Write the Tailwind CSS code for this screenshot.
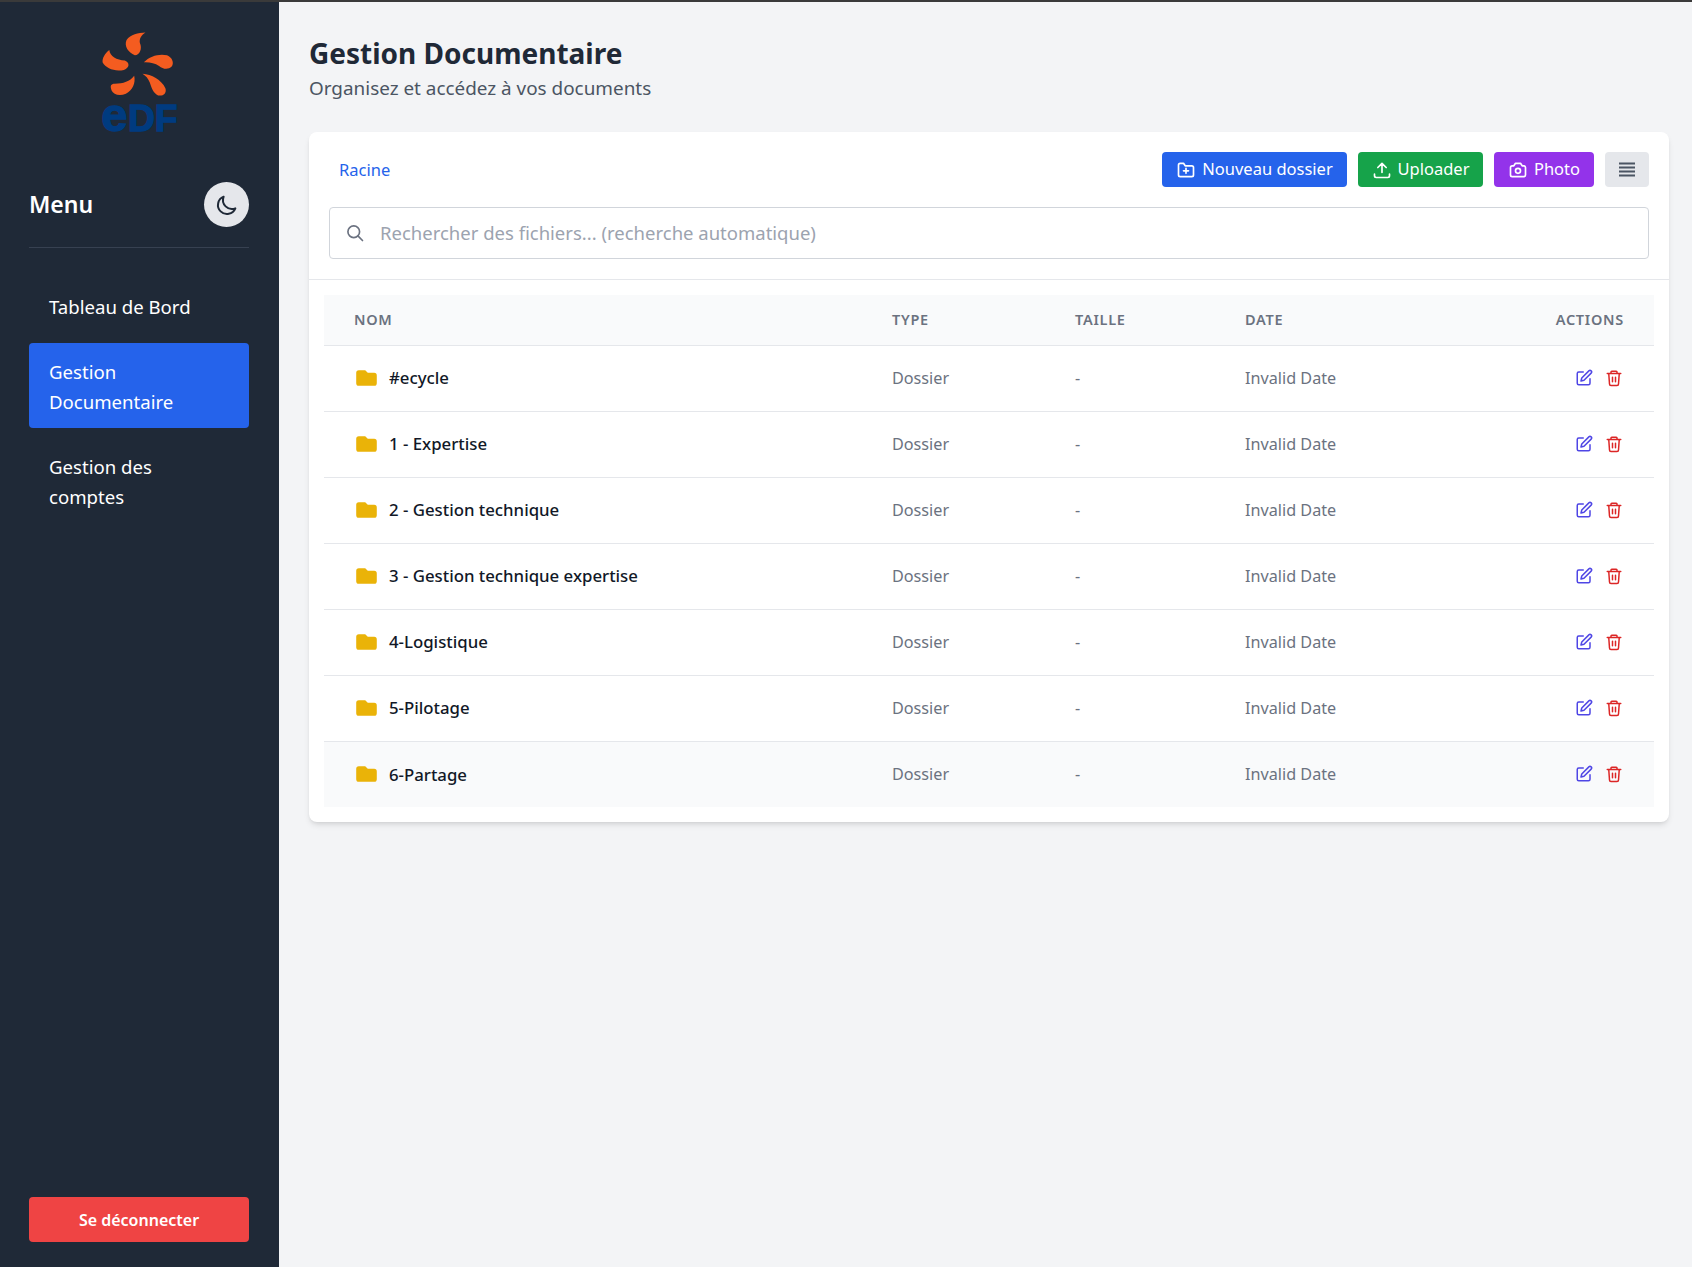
<!DOCTYPE html>
<html lang="fr"><head><meta charset="utf-8"><script src="https://cdn.jsdelivr.net/npm/@tailwindcss/browser@4"></script><title>Gestion Documentaire</title></head>
<body class="font-['Noto_Sans',sans-serif] bg-[#f3f4f6]">
<div class="h-[2px] bg-[#3a3a3a]"></div>
<div class="flex h-[1265px] overflow-hidden">
<aside class="w-[279px] shrink-0 bg-[#1f2937] pl-[29px] pr-[30px] flex flex-col text-white">
  <div class="flex justify-center pt-[28px] h-[180px]">
    <svg class="overflow-visible" width="78" height="103" viewBox="300 90 235 310">
      <g fill="#f45c20">
      <path d="M437 97C415 98 392 102 380 120C372 138 385 158 405 166C420 165 428 145 420 128C418 115 425 105 437 97Z"/>
      <path d="M432 187C450 168 480 160 502 166C518 172 524 190 516 200C505 210 490 208 478 198C465 190 450 186 432 187Z"/>
      <path d="M428 222C455 224 485 240 497 265C502 280 490 290 475 287C458 278 455 262 450 248C445 236 438 228 428 222Z"/>
      <path d="M403 228C408 250 398 272 378 282C358 290 340 284 335 272C330 258 332 252 345 252C370 252 390 245 403 228Z"/>
      <path d="M328 150C330 170 350 180 375 182C390 188 390 204 372 210C345 216 318 206 308 188C306 175 315 160 328 150Z"/>
      </g>
      <text y="393" x="304" fill="#003b80" stroke="#003b80" stroke-width="4" font-family="Liberation Sans" font-weight="700" font-size="112"><tspan font-size="142">e</tspan><tspan x="384">DF</tspan></text>
    </svg>
  </div>
  <div class="flex items-center justify-between pb-5 border-b border-[#374151]">
    <span class="text-[23px] font-semibold">Menu</span>
    <button class="w-[45px] h-[45px] rounded-full bg-[#e5e7eb] flex items-center justify-center text-[#1f2937]">
      <svg class="w-6 h-6" fill="none" stroke="currentColor" stroke-width="2" stroke-linecap="round" stroke-linejoin="round" viewBox="0 0 24 24"><path d="M20.35 15.35A9 9 0 0 1 8.65 3.65a9 9 0 1 0 11.7 11.7Z"/></svg>
    </button>
  </div>
  <nav class="mt-[30px] flex flex-col text-[18.6px] leading-[30px]">
    <a class="px-5 py-[14px] rounded">Tableau de Bord</a>
    <a class="mt-[7px] px-5 pt-[14px] pb-[11px] rounded bg-[#2563eb]">Gestion Documentaire</a>
    <a class="mt-[12px] px-5 py-[12px] rounded">Gestion des comptes</a>
  </nav>
  <div class="mt-auto pb-[25px]">
    <button class="w-full h-[45px] rounded bg-[#ef4444] font-semibold text-[16px]">Se déconnecter</button>
  </div>
</aside>
<main class="flex-1 px-[30px] pt-[33px]">
  <h1 class="text-[28px] leading-[36px] font-bold text-[#1f2937]">Gestion Documentaire</h1>
  <p class="text-[18.9px] leading-[28px] text-[#4b5563] mt-[3px]">Organisez et accédez à vos documents</p>
  <section class="mt-[30px] w-[1360px] bg-white rounded-lg shadow-md pb-[15px]">
    <div class="px-[20px] pt-[20px] pb-[20px] border-b border-[#e5e7eb]">
      <div class="flex items-center justify-between">
        <a class="pl-[10px] pt-[2px] text-[16.5px] text-[#2563eb]">Racine</a>
        <div class="flex items-center gap-[11px] text-[16.5px] text-white">
          <button class="h-[35px] w-[185px] rounded bg-[#2563eb] flex items-center justify-center gap-[6px]">
            <svg class="w-[20px] h-[20px]" fill="none" stroke="currentColor" stroke-width="2" stroke-linecap="round" stroke-linejoin="round" viewBox="0 0 24 24"><path d="M12 10v6M9 13h6"/><path d="M3 18V6a2 2 0 0 1 2-2h4l2 3h8a2 2 0 0 1 2 2v9a2 2 0 0 1-2 2H5a2 2 0 0 1-2-2Z"/></svg>Nouveau dossier</button>
          <button class="h-[35px] w-[125px] rounded bg-[#16a34a] flex items-center justify-center gap-[6px]">
            <svg class="w-[20px] h-[20px]" fill="none" stroke="currentColor" stroke-width="2" stroke-linecap="round" stroke-linejoin="round" viewBox="0 0 24 24"><path d="M12 15V4M7 9l5-5 5 5M3 17v2a2 2 0 0 0 2 2h14a2 2 0 0 0 2-2v-2"/></svg>Uploader</button>
          <button class="h-[35px] w-[100px] rounded bg-[#9333ea] flex items-center justify-center gap-[6px]">
            <svg class="w-[20px] h-[20px]" fill="none" stroke="currentColor" stroke-width="2" stroke-linecap="round" stroke-linejoin="round" viewBox="0 0 24 24"><path d="M3 9a2 2 0 0 1 2-2h2l2-3h6l2 3h2a2 2 0 0 1 2 2v9a2 2 0 0 1-2 2H5a2 2 0 0 1-2-2Z"/><circle cx="12" cy="13" r="3"/></svg>Photo</button>
          <button class="h-[35px] w-[44px] rounded bg-[#e5e7eb] flex items-center justify-center text-[#4b5563]">
            <svg class="w-5 h-5" fill="none" stroke="currentColor" stroke-width="2" viewBox="0 0 20 20"><path d="M2 3.5h16M2 7.5h16M2 11.5h16M2 15.5h16"/></svg></button>
        </div>
      </div>
      <div class="mt-[20px] h-[52px] rounded border border-[#d1d5db] flex items-center pl-[15px] text-[18.5px] text-[#9ca3af]">
        <svg class="w-[20px] h-[20px] text-[#6b7280] mr-[15px]" fill="none" stroke="currentColor" stroke-width="2" stroke-linecap="round" viewBox="0 0 24 24"><circle cx="10.5" cy="10.5" r="7"/><path d="m21 21-5.5-5.5"/></svg>
        <span>Rechercher des fichiers... (recherche automatique)</span>
      </div>
    </div>
    <div class="px-[15px] pt-[15px]">
      <table class="w-full table-fixed text-left border-collapse text-[16.2px]">
        <colgroup><col class="w-[538px]"><col class="w-[183px]"><col class="w-[170px]"><col><col></colgroup>
        <thead><tr class="bg-[#f9fafb] border-b border-[#e5e7eb] h-[50px] text-[14.5px] text-[#6b7280] uppercase tracking-wider font-semibold">
          <th class="pl-[30px] font-semibold">Nom</th><th class="pl-[30px] font-semibold">Type</th><th class="pl-[30px] font-semibold">Taille</th><th class="pl-[30px] font-semibold">Date</th><th class="pr-[30px] text-right font-semibold">Actions</th>
        </tr></thead>
        <tbody class="text-[#6b7280]">
          <tr class="h-[66px] border-b border-[#e5e7eb]"><td class="pl-[32px]"><div class="flex items-center gap-[12px] text-[16.8px] font-medium text-[#111827]"><svg class="w-[21px] h-[18px] text-[#eab308]" fill="currentColor" viewBox="2 3 16 14"><path d="M2 6a2 2 0 0 1 2-2h5l2 2h5a2 2 0 0 1 2 2v6a2 2 0 0 1-2 2H4a2 2 0 0 1-2-2V6Z"/></svg>#ecycle</div></td><td class="pl-[30px]">Dossier</td><td class="pl-[30px]">-</td><td class="pl-[30px]">Invalid Date</td><td class="pr-[30px]"><div class="flex justify-end gap-[12px] mr-[1px]"><svg class="w-[18px] h-[18px] text-[#4f46e5]" fill="none" stroke="currentColor" stroke-width="2" stroke-linecap="round" stroke-linejoin="round" viewBox="0 0 24 24"><path d="M11 4H5a2 2 0 0 0-2 2v13a2 2 0 0 0 2 2h13a2 2 0 0 0 2-2v-6"/><path d="M18.5 2.5a2.1 2.1 0 0 1 3 3L12 15l-4 1 1-4Z"/></svg><svg class="w-[18px] h-[18px] text-[#dc2626]" fill="none" stroke="currentColor" stroke-width="2" stroke-linecap="round" stroke-linejoin="round" viewBox="0 0 24 24"><path d="M3 6h18M8 6V4a1 1 0 0 1 1-1h6a1 1 0 0 1 1 1v2M19 6l-1 14a2 2 0 0 1-2 2H8a2 2 0 0 1-2-2L5 6M10 11v6M14 11v6"/></svg></div></td></tr>
          <tr class="h-[66px] border-b border-[#e5e7eb]"><td class="pl-[32px]"><div class="flex items-center gap-[12px] text-[16.8px] font-medium text-[#111827]"><svg class="w-[21px] h-[18px] text-[#eab308]" fill="currentColor" viewBox="2 3 16 14"><path d="M2 6a2 2 0 0 1 2-2h5l2 2h5a2 2 0 0 1 2 2v6a2 2 0 0 1-2 2H4a2 2 0 0 1-2-2V6Z"/></svg>1 - Expertise</div></td><td class="pl-[30px]">Dossier</td><td class="pl-[30px]">-</td><td class="pl-[30px]">Invalid Date</td><td class="pr-[30px]"><div class="flex justify-end gap-[12px] mr-[1px]"><svg class="w-[18px] h-[18px] text-[#4f46e5]" fill="none" stroke="currentColor" stroke-width="2" stroke-linecap="round" stroke-linejoin="round" viewBox="0 0 24 24"><path d="M11 4H5a2 2 0 0 0-2 2v13a2 2 0 0 0 2 2h13a2 2 0 0 0 2-2v-6"/><path d="M18.5 2.5a2.1 2.1 0 0 1 3 3L12 15l-4 1 1-4Z"/></svg><svg class="w-[18px] h-[18px] text-[#dc2626]" fill="none" stroke="currentColor" stroke-width="2" stroke-linecap="round" stroke-linejoin="round" viewBox="0 0 24 24"><path d="M3 6h18M8 6V4a1 1 0 0 1 1-1h6a1 1 0 0 1 1 1v2M19 6l-1 14a2 2 0 0 1-2 2H8a2 2 0 0 1-2-2L5 6M10 11v6M14 11v6"/></svg></div></td></tr>
          <tr class="h-[66px] border-b border-[#e5e7eb]"><td class="pl-[32px]"><div class="flex items-center gap-[12px] text-[16.8px] font-medium text-[#111827]"><svg class="w-[21px] h-[18px] text-[#eab308]" fill="currentColor" viewBox="2 3 16 14"><path d="M2 6a2 2 0 0 1 2-2h5l2 2h5a2 2 0 0 1 2 2v6a2 2 0 0 1-2 2H4a2 2 0 0 1-2-2V6Z"/></svg>2 - Gestion technique</div></td><td class="pl-[30px]">Dossier</td><td class="pl-[30px]">-</td><td class="pl-[30px]">Invalid Date</td><td class="pr-[30px]"><div class="flex justify-end gap-[12px] mr-[1px]"><svg class="w-[18px] h-[18px] text-[#4f46e5]" fill="none" stroke="currentColor" stroke-width="2" stroke-linecap="round" stroke-linejoin="round" viewBox="0 0 24 24"><path d="M11 4H5a2 2 0 0 0-2 2v13a2 2 0 0 0 2 2h13a2 2 0 0 0 2-2v-6"/><path d="M18.5 2.5a2.1 2.1 0 0 1 3 3L12 15l-4 1 1-4Z"/></svg><svg class="w-[18px] h-[18px] text-[#dc2626]" fill="none" stroke="currentColor" stroke-width="2" stroke-linecap="round" stroke-linejoin="round" viewBox="0 0 24 24"><path d="M3 6h18M8 6V4a1 1 0 0 1 1-1h6a1 1 0 0 1 1 1v2M19 6l-1 14a2 2 0 0 1-2 2H8a2 2 0 0 1-2-2L5 6M10 11v6M14 11v6"/></svg></div></td></tr>
          <tr class="h-[66px] border-b border-[#e5e7eb]"><td class="pl-[32px]"><div class="flex items-center gap-[12px] text-[16.8px] font-medium text-[#111827]"><svg class="w-[21px] h-[18px] text-[#eab308]" fill="currentColor" viewBox="2 3 16 14"><path d="M2 6a2 2 0 0 1 2-2h5l2 2h5a2 2 0 0 1 2 2v6a2 2 0 0 1-2 2H4a2 2 0 0 1-2-2V6Z"/></svg>3 - Gestion technique expertise</div></td><td class="pl-[30px]">Dossier</td><td class="pl-[30px]">-</td><td class="pl-[30px]">Invalid Date</td><td class="pr-[30px]"><div class="flex justify-end gap-[12px] mr-[1px]"><svg class="w-[18px] h-[18px] text-[#4f46e5]" fill="none" stroke="currentColor" stroke-width="2" stroke-linecap="round" stroke-linejoin="round" viewBox="0 0 24 24"><path d="M11 4H5a2 2 0 0 0-2 2v13a2 2 0 0 0 2 2h13a2 2 0 0 0 2-2v-6"/><path d="M18.5 2.5a2.1 2.1 0 0 1 3 3L12 15l-4 1 1-4Z"/></svg><svg class="w-[18px] h-[18px] text-[#dc2626]" fill="none" stroke="currentColor" stroke-width="2" stroke-linecap="round" stroke-linejoin="round" viewBox="0 0 24 24"><path d="M3 6h18M8 6V4a1 1 0 0 1 1-1h6a1 1 0 0 1 1 1v2M19 6l-1 14a2 2 0 0 1-2 2H8a2 2 0 0 1-2-2L5 6M10 11v6M14 11v6"/></svg></div></td></tr>
          <tr class="h-[66px] border-b border-[#e5e7eb]"><td class="pl-[32px]"><div class="flex items-center gap-[12px] text-[16.8px] font-medium text-[#111827]"><svg class="w-[21px] h-[18px] text-[#eab308]" fill="currentColor" viewBox="2 3 16 14"><path d="M2 6a2 2 0 0 1 2-2h5l2 2h5a2 2 0 0 1 2 2v6a2 2 0 0 1-2 2H4a2 2 0 0 1-2-2V6Z"/></svg>4-Logistique</div></td><td class="pl-[30px]">Dossier</td><td class="pl-[30px]">-</td><td class="pl-[30px]">Invalid Date</td><td class="pr-[30px]"><div class="flex justify-end gap-[12px] mr-[1px]"><svg class="w-[18px] h-[18px] text-[#4f46e5]" fill="none" stroke="currentColor" stroke-width="2" stroke-linecap="round" stroke-linejoin="round" viewBox="0 0 24 24"><path d="M11 4H5a2 2 0 0 0-2 2v13a2 2 0 0 0 2 2h13a2 2 0 0 0 2-2v-6"/><path d="M18.5 2.5a2.1 2.1 0 0 1 3 3L12 15l-4 1 1-4Z"/></svg><svg class="w-[18px] h-[18px] text-[#dc2626]" fill="none" stroke="currentColor" stroke-width="2" stroke-linecap="round" stroke-linejoin="round" viewBox="0 0 24 24"><path d="M3 6h18M8 6V4a1 1 0 0 1 1-1h6a1 1 0 0 1 1 1v2M19 6l-1 14a2 2 0 0 1-2 2H8a2 2 0 0 1-2-2L5 6M10 11v6M14 11v6"/></svg></div></td></tr>
          <tr class="h-[66px] border-b border-[#e5e7eb]"><td class="pl-[32px]"><div class="flex items-center gap-[12px] text-[16.8px] font-medium text-[#111827]"><svg class="w-[21px] h-[18px] text-[#eab308]" fill="currentColor" viewBox="2 3 16 14"><path d="M2 6a2 2 0 0 1 2-2h5l2 2h5a2 2 0 0 1 2 2v6a2 2 0 0 1-2 2H4a2 2 0 0 1-2-2V6Z"/></svg>5-Pilotage</div></td><td class="pl-[30px]">Dossier</td><td class="pl-[30px]">-</td><td class="pl-[30px]">Invalid Date</td><td class="pr-[30px]"><div class="flex justify-end gap-[12px] mr-[1px]"><svg class="w-[18px] h-[18px] text-[#4f46e5]" fill="none" stroke="currentColor" stroke-width="2" stroke-linecap="round" stroke-linejoin="round" viewBox="0 0 24 24"><path d="M11 4H5a2 2 0 0 0-2 2v13a2 2 0 0 0 2 2h13a2 2 0 0 0 2-2v-6"/><path d="M18.5 2.5a2.1 2.1 0 0 1 3 3L12 15l-4 1 1-4Z"/></svg><svg class="w-[18px] h-[18px] text-[#dc2626]" fill="none" stroke="currentColor" stroke-width="2" stroke-linecap="round" stroke-linejoin="round" viewBox="0 0 24 24"><path d="M3 6h18M8 6V4a1 1 0 0 1 1-1h6a1 1 0 0 1 1 1v2M19 6l-1 14a2 2 0 0 1-2 2H8a2 2 0 0 1-2-2L5 6M10 11v6M14 11v6"/></svg></div></td></tr>
          <tr class="h-[66px] bg-[#f9fafb]"><td class="pl-[32px]"><div class="flex items-center gap-[12px] text-[16.8px] font-medium text-[#111827]"><svg class="w-[21px] h-[18px] text-[#eab308]" fill="currentColor" viewBox="2 3 16 14"><path d="M2 6a2 2 0 0 1 2-2h5l2 2h5a2 2 0 0 1 2 2v6a2 2 0 0 1-2 2H4a2 2 0 0 1-2-2V6Z"/></svg>6-Partage</div></td><td class="pl-[30px]">Dossier</td><td class="pl-[30px]">-</td><td class="pl-[30px]">Invalid Date</td><td class="pr-[30px]"><div class="flex justify-end gap-[12px] mr-[1px]"><svg class="w-[18px] h-[18px] text-[#4f46e5]" fill="none" stroke="currentColor" stroke-width="2" stroke-linecap="round" stroke-linejoin="round" viewBox="0 0 24 24"><path d="M11 4H5a2 2 0 0 0-2 2v13a2 2 0 0 0 2 2h13a2 2 0 0 0 2-2v-6"/><path d="M18.5 2.5a2.1 2.1 0 0 1 3 3L12 15l-4 1 1-4Z"/></svg><svg class="w-[18px] h-[18px] text-[#dc2626]" fill="none" stroke="currentColor" stroke-width="2" stroke-linecap="round" stroke-linejoin="round" viewBox="0 0 24 24"><path d="M3 6h18M8 6V4a1 1 0 0 1 1-1h6a1 1 0 0 1 1 1v2M19 6l-1 14a2 2 0 0 1-2 2H8a2 2 0 0 1-2-2L5 6M10 11v6M14 11v6"/></svg></div></td></tr>
        </tbody>
      </table>
    </div>
  </section>
</main>
</div>
</body></html>
